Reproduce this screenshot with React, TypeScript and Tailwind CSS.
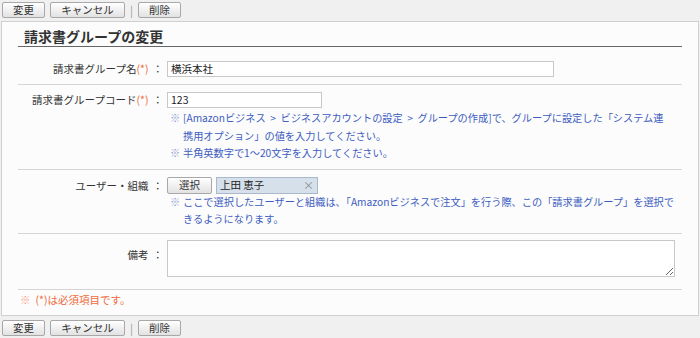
import React from 'react';

const font = { fontFamily: '"Noto Sans CJK JP", "Noto Sans", sans-serif' };

const Btn: React.FC<{ label: string; w: string }> = ({ label, w }) => (
  <button
    className={`${w} h-[16px] border border-[#a8a8a8] rounded-[2px] bg-gradient-to-b from-[#ffffff] to-[#e2e2e2] text-[10.5px] leading-[14px] text-[#333] flex items-center justify-center`}
  >
    {label}
  </button>
);

const ButtonBar: React.FC = () => (
  <div className="flex items-center h-[16px] pl-[2px]">
    <Btn label="変更" w="w-[43px]" />
    <div className="w-[5px]" />
    <Btn label="キャンセル" w="w-[75px]" />
    <span className="w-[13px] text-center text-[11px] text-[#999] leading-[14px]">|</span>
    <Btn label="削除" w="w-[43px]" />
  </div>
);

const Label: React.FC<{ text: string; req?: boolean }> = ({ text, req }) => (
  <div className="w-[149px] shrink-0 text-right text-[10.5px] leading-[16px] text-[#333] pr-[4px] whitespace-nowrap">
    {text}
    {req && <span className="text-[#f06a3a]">(*)</span>}
    <span className="ml-[4px]">：</span>
  </div>
);

const Note: React.FC<{ children: React.ReactNode }> = ({ children }) => (
  <div className="flex text-[10.2px] leading-[17.5px] text-[#3d5cc0] whitespace-nowrap">
    <span className="w-[16px] shrink-0 pl-[3px] text-[#8a9bd0]">※</span>
    <span>{children}</span>
  </div>
);

export default function App() {
  return (
    <div className="w-[700px] h-[338px] bg-[#f0f0f0] pt-[2px] overflow-hidden" style={font}>
      <ButtonBar />
      <div className="mt-[3px] ml-[1px] w-[698px] h-[295px] border border-[#d0d0d0] bg-[#fcfcfc] px-[16px]">
        <div className="h-[25px] pl-[6px] pt-[4px] border-b border-[#666] text-[14px] font-bold leading-[20px] text-[#333] mb-[7px]">
          請求書グループの変更
        </div>

        <div className="flex py-[7px] border-b border-[#d5d5d5]">
          <Label text="請求書グループ名" req />
          <div className="w-[387px] h-[16px] border border-[#c8c8c8] bg-white text-[10.5px] leading-[14px] pl-[3px] text-[#222]">
            横浜本社
          </div>
        </div>

        <div className="flex py-[7px] border-b border-[#d5d5d5]">
          <Label text="請求書グループコード" req />
          <div className="flex-1">
            <div className="w-[155px] h-[16px] border border-[#c8c8c8] bg-white text-[10.5px] leading-[14px] pl-[3px] text-[#222]">
              123
            </div>
            <div className="pt-[1px]">
              <Note>
                [Amazonビジネス&nbsp; &gt; &nbsp;ビジネスアカウントの設定&nbsp; &gt; &nbsp;グループの作成]で、グループに設定した「システム連
                <br />
                携用オプション」の値を入力してください。
              </Note>
              <Note>半角英数字で1～20文字を入力してください。</Note>
            </div>
          </div>
        </div>

        <div className="flex pt-[7px] pb-[5px] border-b border-[#d5d5d5]">
          <div className="pt-[1px]">
            <Label text="ユーザー・組織" />
          </div>
          <div className="flex-1">
            <div className="flex items-center">
              <button className="w-[45px] h-[17px] border border-[#a8a8a8] rounded-[2px] bg-gradient-to-b from-[#ffffff] to-[#e2e2e2] text-[10.5px] leading-[14px] text-[#333] flex items-center justify-center">
                選択
              </button>
              <div className="ml-[4px] w-[102px] h-[17px] border border-[#a9b9cb] bg-[#d6e0ea] flex items-center justify-between pl-[3px] pr-[3px] text-[10.5px] leading-[14px] text-[#222]">
                <span>上田 恵子</span>
                <span className="text-[#8a8a8a] text-[11px]">×</span>
              </div>
            </div>
            <div className="-mt-[1px]">
              <Note>
                ここで選択したユーザーと組織は、「Amazonビジネスで注文」を行う際、この「請求書グループ」を選択で
                <br />
                きるようになります。
              </Note>
            </div>
          </div>
        </div>

        <div className="flex pt-[6px] pb-[12px] border-b border-[#d5d5d5]">
          <div className="pt-[7px]">
            <Label text="備考" />
          </div>
          <textarea className="w-[508px] h-[37px] border border-[#c8c8c8] bg-white resize-y block" />
        </div>

        <div className="text-[10.5px] leading-[17px] text-[#f06a3a] pt-[1px] pl-[2px]">
          <span className="text-[#f49a80] mr-[5px]">※</span>(*)は必須項目です。
        </div>
      </div>
      <div className="mt-[4px]">
        <ButtonBar />
      </div>
    </div>
  );
}
